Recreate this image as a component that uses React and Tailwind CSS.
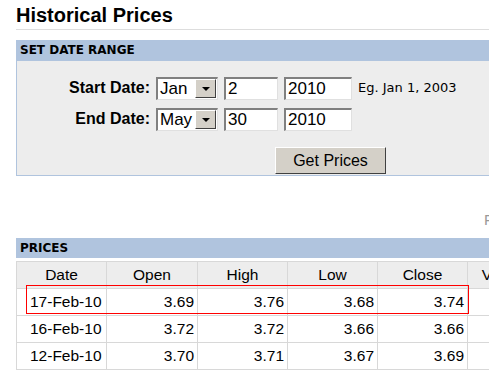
import React from "react";

const rows = [
  ["17-Feb-10", "3.69", "3.76", "3.68", "3.74"],
  ["16-Feb-10", "3.72", "3.72", "3.66", "3.66"],
  ["12-Feb-10", "3.70", "3.71", "3.67", "3.69"],
];

function Select({ value }) {
  return (
    <div className="flex h-[23px] w-[62px] items-center border-t-2 border-l-2 border-t-[#808080] border-l-[#808080] border-b border-r border-b-[#e0e0e0] border-r-[#e0e0e0] bg-white">
      <span className="flex-1 pl-[2px] text-[17px] leading-none text-black">{value}</span>
      <span className="mr-[1px] flex h-[19px] w-[21px] items-center justify-center border border-t-white border-l-white border-b-[#404040] border-r-[#404040] bg-[#d4d0c8]">
        <span className="h-0 w-0 border-x-[4px] border-t-[4px] border-x-transparent border-t-black" />
      </span>
    </div>
  );
}

function Field({ value, w }) {
  return (
    <div className={`flex h-[23px] items-center border-t-2 border-l-2 border-t-[#808080] border-l-[#808080] border-b border-r border-b-[#e0e0e0] border-r-[#e0e0e0] bg-white pl-[2px] text-[17px] leading-none text-black ${w}`}>
      {value}
    </div>
  );
}

function App() {
  return (
    <div className="h-[371px] w-[489px] overflow-hidden bg-white font-['Liberation_Sans',Arial,sans-serif]">
      <div className="w-[560px] pl-4">
        {/* title */}
        <h1 className="pt-[4px] text-[20px] font-bold leading-[22px] text-black">Historical Prices</h1>
        <div className="mt-[3px] border-b border-[#dddddd]" />

        {/* date range panel */}
        <div className="mt-[10px]">
          <div className="h-[21px] bg-[#b0c4de] pl-1 font-['DejaVu_Sans',Verdana,sans-serif] text-[12px] font-bold leading-[21px] text-black">
            SET DATE RANGE
          </div>
          <div className="h-[115px] border-b border-l border-[#b0c4de] bg-[#ededed] pt-[15px]">
            <div className="flex items-center gap-[6px]">
              <span className="w-[133px] text-right text-[16px] font-bold text-black">Start Date:</span>
              <Select value="Jan" />
              <Field value="2" w="w-[54px]" />
              <Field value="2010" w="w-[68px]" />
              <span className="font-['DejaVu_Sans',Verdana,sans-serif] text-[13px] text-black">Eg. Jan 1, 2003</span>
            </div>
            <div className="mt-[7px] flex items-center gap-[6px]">
              <span className="w-[133px] text-right text-[16px] font-bold text-black">End Date:</span>
              <Select value="May" />
              <Field value="30" w="w-[54px]" />
              <Field value="2010" w="w-[68px]" />
            </div>
            <div className="mt-[16px] pl-[258px]">
              <button type="button" className="h-[27px] w-[111px] border border-t-white border-l-white border-b-[#404040] border-r-[#404040] bg-[#d4d0c8] text-[16px] text-black">
                Get Prices
              </button>
            </div>
          </div>
        </div>

        {/* pager link, cut at the window edge */}
        <div className="mt-[35px] pl-[468px] text-[15px] leading-[18px] text-[#999999]">First</div>

        {/* prices */}
        <div className="mt-[9px] h-[20px] bg-[#b0c4de] pl-1 font-['DejaVu_Sans',Verdana,sans-serif] text-[12px] font-bold leading-[20px] text-black">
          PRICES
        </div>
        <div className="relative mt-[3px] border-l border-t border-[#d8d8d8]">
          <div className="grid grid-cols-[90px_91px_90px_90px_90px_80px] bg-[#ededed] text-[15.5px] text-black">
            {["Date", "Open", "High", "Low", "Close", "Volume"].map((h) => (
              <div key={h} className="h-[27px] border-b border-r border-[#d8d8d8] text-center leading-[26px]">{h}</div>
            ))}
          </div>
          {rows.map((r) => (
            <div key={r[0]} className="grid grid-cols-[90px_91px_90px_90px_90px_80px] text-[15.5px] text-black">
              <div className="h-[27px] border-b border-r border-[#d8d8d8] pl-[13px] leading-[26px]">{r[0]}</div>
              {r.slice(1).map((v, i) => (
                <div key={i} className="h-[27px] border-b border-r border-[#d8d8d8] pr-[3px] text-right leading-[26px]">{v}</div>
              ))}
              <div className="h-[27px] border-b border-r border-[#d8d8d8]" />
            </div>
          ))}
          {/* highlight on the first row */}
          <div className="absolute left-[9px] top-[23px] h-[29px] w-[443px] border border-[#ff0000]" />
        </div>
      </div>
    </div>
  );
}

export default App;
